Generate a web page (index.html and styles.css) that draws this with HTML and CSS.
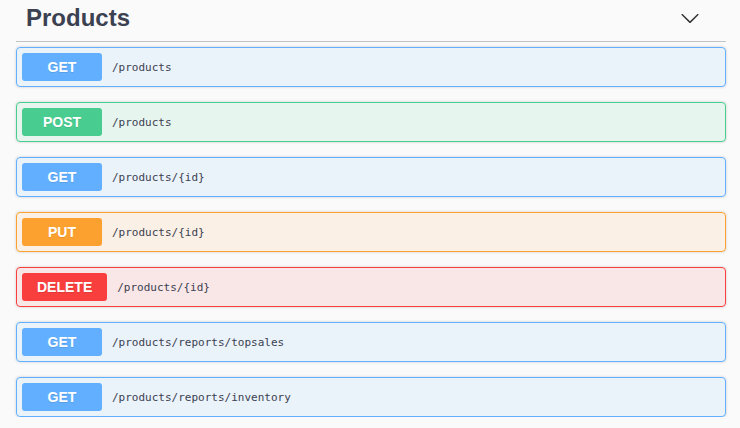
FILE: index.html
```html
<!DOCTYPE html>
<html lang="en">
<head>
<meta charset="utf-8">
<title>Products</title>
<link rel="stylesheet" href="styles.css">
</head>
<body>
<div class="tag-section">
  <h4 class="tag-header">
    <span class="tag-title">Products</span>
    <svg class="arrow" width="20" height="20" viewBox="0 0 20 20" aria-hidden="true"><path d="M17.418 6.109c.272-.268.709-.268.979 0s.271.701 0 .969l-7.908 7.83c-.27.268-.707.268-.979 0l-7.908-7.83c-.27-.268-.27-.701 0-.969.271-.268.709-.268.979 0L10 13.25l7.418-7.141z"/></svg>
  </h4>
  <div class="ops">
    <div class="op op-get"><span class="method">GET</span><span class="path">/products</span></div>
    <div class="op op-post"><span class="method">POST</span><span class="path">/products</span></div>
    <div class="op op-get"><span class="method">GET</span><span class="path">/products/{id}</span></div>
    <div class="op op-put"><span class="method">PUT</span><span class="path">/products/{id}</span></div>
    <div class="op op-delete"><span class="method">DELETE</span><span class="path">/products/{id}</span></div>
    <div class="op op-get"><span class="method">GET</span><span class="path">/products/reports/topsales</span></div>
    <div class="op op-get"><span class="method">GET</span><span class="path">/products/reports/inventory</span></div>
  </div>
</div>
</body>
</html>
```

FILE: styles.css
```css
html, body {
  margin: 0;
  padding: 0;
  background: #fafafa;
}
body {
  font-family: "Liberation Sans", Arial, sans-serif;
  color: #3b4151;
}
.tag-section {
  width: 710px;
  margin-left: 16px;
}
.tag-header {
  display: flex;
  align-items: center;
  justify-content: space-between;
  margin: 0 0 5px;
  padding: 4px 26px 10px 10px;
  height: 27px;
  border-bottom: 1px solid rgba(59, 65, 81, 0.3);
  font-size: 24px;
  font-weight: 700;
  line-height: 27px;
  color: #3b4151;
}
.arrow {
  display: block;
  fill: #333;
  margin-top: 0;
}
.ops {
  display: flex;
  flex-direction: column;
  gap: 15px;
}
.op {
  display: flex;
  align-items: center;
  height: 38px;
  padding: 0 5px;
  border: 1px solid;
  border-radius: 4px;
  box-shadow: 0 0 3px rgba(0, 0, 0, 0.19);
}
.method {
  box-sizing: border-box;
  min-width: 80px;
  height: 28px;
  padding: 0 15px;
  border-radius: 3px;
  color: #fff;
  font-size: 14px;
  font-weight: 700;
  line-height: 28px;
  text-align: center;
  text-shadow: 0 1px 0 rgba(0, 0, 0, 0.1);
}
.path {
  padding: 0 10px;
  font-family: "DejaVu Sans Mono", monospace;
  font-size: 11px;
  font-weight: 400;
  color: #3b4151;
}
.op-get { border-color: #61affe; background: rgba(97, 175, 254, 0.1); }
.op-get .method { background: #61affe; }
.op-post { border-color: #49cc90; background: rgba(73, 204, 144, 0.1); }
.op-post .method { background: #49cc90; }
.op-put { border-color: #fca130; background: rgba(252, 161, 48, 0.1); }
.op-put .method { background: #fca130; }
.op-delete { border-color: #f93e3e; background: rgba(249, 62, 62, 0.1); }
.op-delete .method { background: #f93e3e; }
```
